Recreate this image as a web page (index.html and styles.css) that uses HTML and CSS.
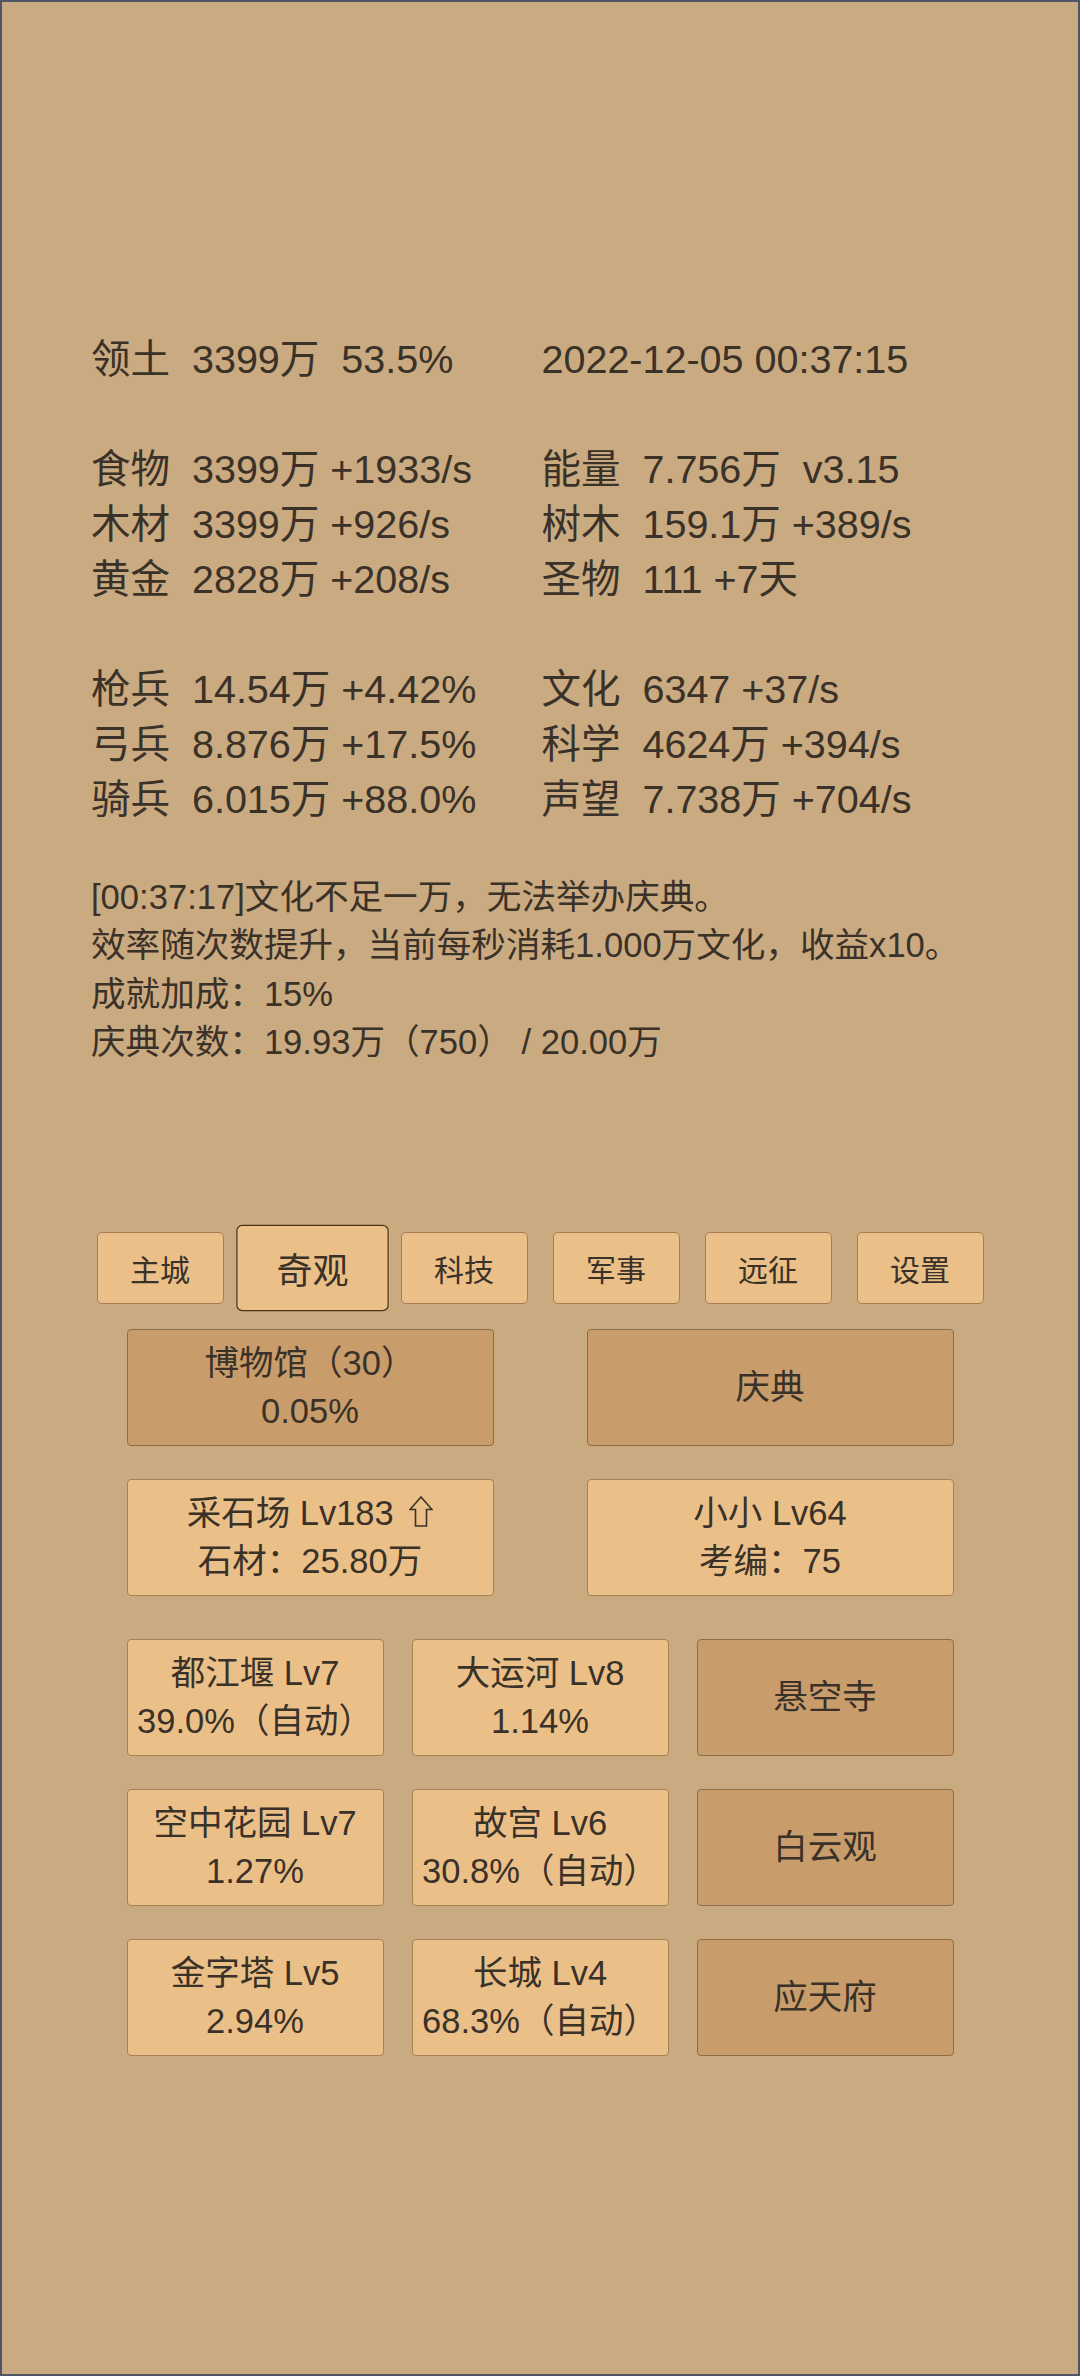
FILE: index.html
```html
<!DOCTYPE html>
<html lang="zh-CN">
<head>
<meta charset="utf-8">
<title>奇观</title>
<link rel="stylesheet" href="styles.css">
</head>
<body>
<div class="screen">
  <section class="stats">
    <div class="row"><span>领土  3399万  53.5%</span><span>2022-12-05 00:37:15</span></div>
    <div class="row"></div>
    <div class="row"><span>食物  3399万 +1933/s</span><span>能量  7.756万  v3.15</span></div>
    <div class="row"><span>木材  3399万 +926/s</span><span>树木  159.1万 +389/s</span></div>
    <div class="row"><span>黄金  2828万 +208/s</span><span>圣物  111 +7天</span></div>
    <div class="row"></div>
    <div class="row"><span>枪兵  14.54万 +4.42%</span><span>文化  6347 +37/s</span></div>
    <div class="row"><span>弓兵  8.876万 +17.5%</span><span>科学  4624万 +394/s</span></div>
    <div class="row"><span>骑兵  6.015万 +88.0%</span><span>声望  7.738万 +704/s</span></div>
  </section>

  <section class="log">
    <p>[00:37:17]文化不足一万，无法举办庆典。</p>
    <p>效率随次数提升，当前每秒消耗1.000万文化，收益x10。</p>
    <p>成就加成：15%</p>
    <p>庆典次数：19.93万（750） / 20.00万</p>
  </section>

  <nav class="tabs">
    <div class="tab-slot"><div class="tab">主城</div></div>
    <div class="tab-slot"><div class="tab active">奇观</div></div>
    <div class="tab-slot"><div class="tab">科技</div></div>
    <div class="tab-slot"><div class="tab">军事</div></div>
    <div class="tab-slot"><div class="tab">远征</div></div>
    <div class="tab-slot"><div class="tab">设置</div></div>
  </nav>

  <section class="pairs">
    <div class="card wide dark"><span>博物馆（30）</span><span>0.05%</span></div>
    <div class="card wide dark"><span>庆典</span></div>
    <div class="card wide"><span>采石场 Lv183 <svg class="up" viewBox="0 0 24 31" width="24" height="31"><polygon points="12,1 23,13.5 17.5,13.5 17.5,30 6.5,30 6.5,13.5 1,13.5" /></svg></span><span>石材：25.80万</span></div>
    <div class="card wide"><span>小小 Lv64</span><span>考编：75</span></div>
  </section>

  <section class="triples">
    <div class="card"><span>都江堰 Lv7</span><span>39.0%（自动）</span></div>
    <div class="card"><span>大运河 Lv8</span><span>1.14%</span></div>
    <div class="card dark"><span>悬空寺</span></div>
    <div class="card"><span>空中花园 Lv7</span><span>1.27%</span></div>
    <div class="card"><span>故宫 Lv6</span><span>30.8%（自动）</span></div>
    <div class="card dark"><span>白云观</span></div>
    <div class="card"><span>金字塔 Lv5</span><span>2.94%</span></div>
    <div class="card"><span>长城 Lv4</span><span>68.3%（自动）</span></div>
    <div class="card dark"><span>应天府</span></div>
  </section>
</div>
</body>
</html>
```

FILE: styles.css
```css
html, body {
  margin: 0;
  padding: 0;
}

body {
  font-family: "Liberation Sans", "Noto Sans CJK SC", sans-serif;
  color: #3a3128;
}

.screen {
  width: 1080px;
  height: 2376px;
  box-sizing: border-box;
  border: 2px solid #4d5566;
  background: #caaa80;
  padding-top: 329.5px;
  overflow: hidden;
}

.stats {
  padding-left: 89px;
  font-size: 39.5px;
  line-height: 55px;
}

.row {
  display: grid;
  grid-template-columns: 450.5px auto;
  height: 55px;
  white-space: pre;
}

.log {
  margin-top: 46px;
  padding-left: 89px;
  font-size: 34.6px;
  line-height: 48.5px;
}

.log p {
  margin: 0;
  white-space: pre;
}

.tabs {
  display: flex;
  margin: 165px 0 0 82px;
}

.tab-slot {
  width: 152px;
  display: flex;
  justify-content: center;
}

.tab {
  width: 127px;
  height: 72px;
  box-sizing: border-box;
  border: 1.5px solid #a57e52;
  border-radius: 5px;
  background: #ebc088;
  font-size: 30px;
  display: flex;
  align-items: center;
  justify-content: center;
}

.tab.active {
  transform: scale(1.2);
  border-color: #4b3219;
}

.pairs {
  margin: 25px 0 0 124.5px;
  width: 827px;
  display: grid;
  grid-template-columns: 367px 367px;
  justify-content: space-between;
  row-gap: 32.5px;
}

.triples {
  margin: 42.5px 0 0 124.5px;
  width: 827px;
  display: grid;
  grid-template-columns: repeat(3, 257px);
  column-gap: 28px;
  row-gap: 32.5px;
}

.card {
  height: 117.5px;
  box-sizing: border-box;
  border: 1.5px solid #a58156;
  border-radius: 4px;
  background: #ebc088;
  display: flex;
  flex-direction: column;
  justify-content: center;
  align-items: center;
  font-size: 34.5px;
  line-height: 48px;
  white-space: nowrap;
}

.card.dark {
  background: #c89d6b;
  border-color: #8d6c48;
}

.up {
  margin-left: 6px;
  vertical-align: -2px;
}

.up polygon {
  fill: none;
  stroke: #3a3128;
  stroke-width: 1.6;
  stroke-linejoin: miter;
}
```
